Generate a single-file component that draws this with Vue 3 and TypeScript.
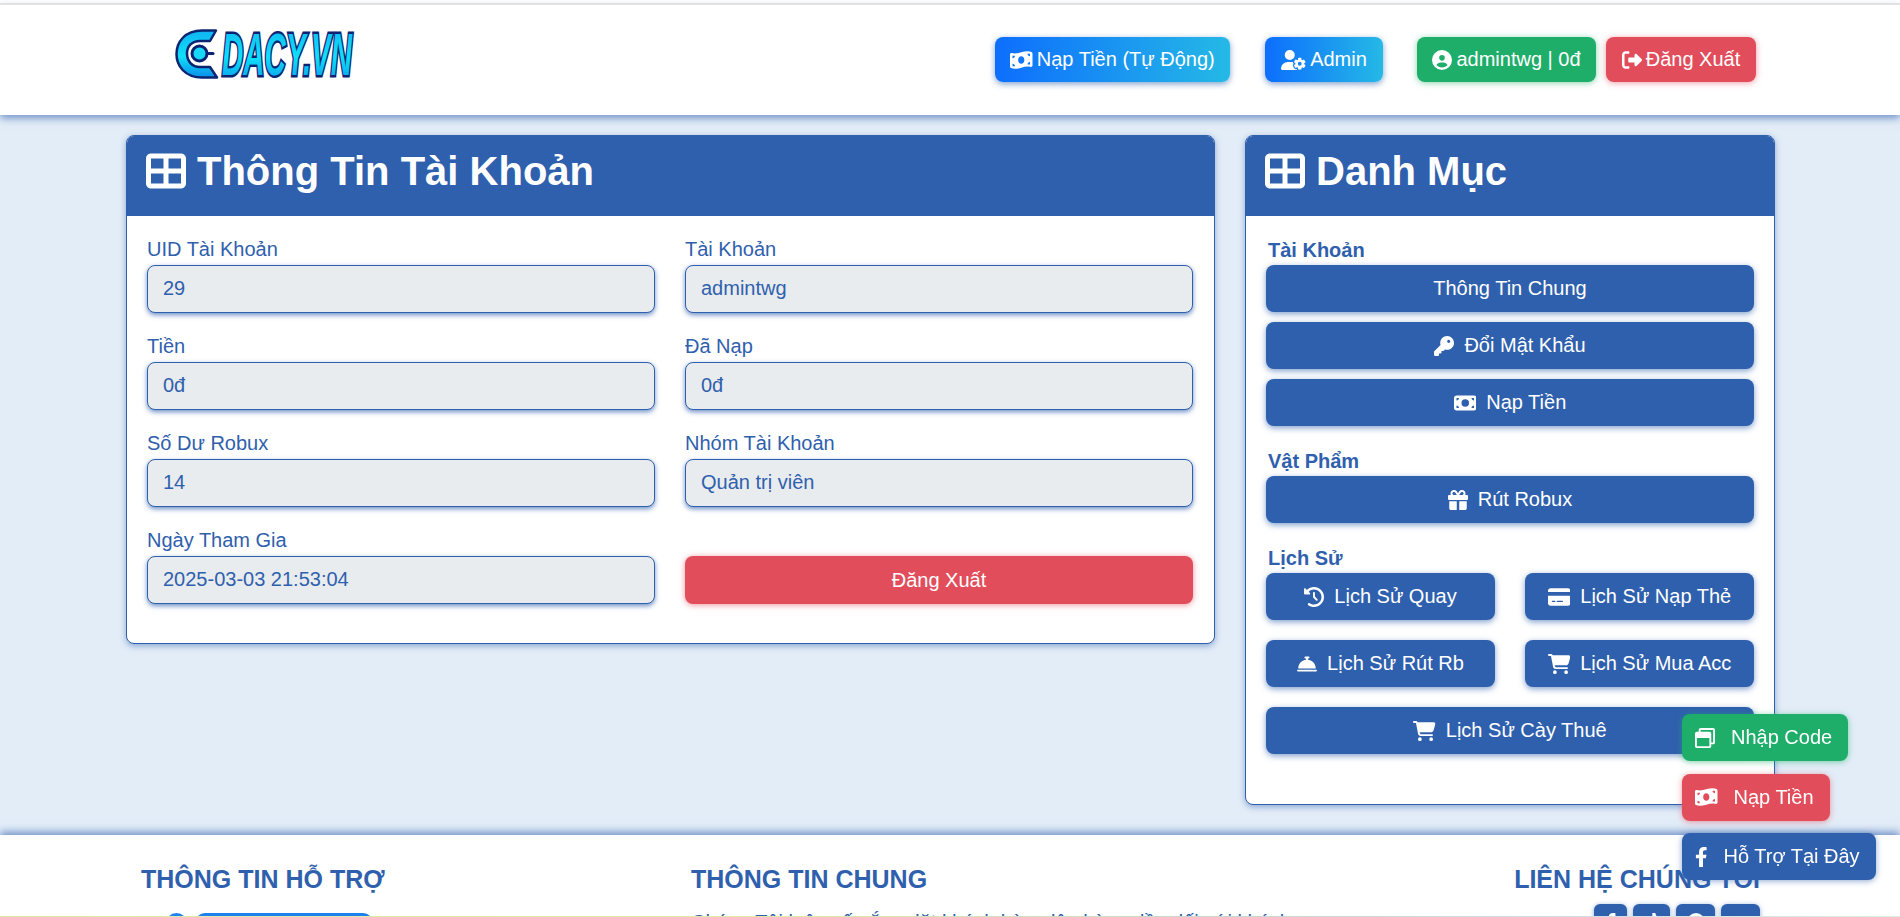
<script setup lang="ts">
interface Icon {
  box: string;
  d: string;
}

const icons: Record<string, Icon> = {
  grid: { box: '0 0 512 512', d: 'M448 96V224H288V96H448zm0 192V416H288V288H448zM224 224H64V96H224V224zM64 288H224V416H64V288zM64 32C28.7 32 0 60.7 0 96V416c0 35.3 28.7 64 64 64H448c35.3 0 64-28.7 64-64V96c0-35.3-28.7-64-64-64H64z' },
  wave: { box: '0 0 576 512', d: 'M0 112.5V422.3c0 18 10.1 35 27 41.3c87 32.5 174 10.3 261-11.9c79.8-20.3 159.6-40.7 239.3-18.9c23 6.3 48.7-9.5 48.7-33.4V89.7c0-18-10.1-35-27-41.3C462 15.9 375 38.1 288 60.3C208.2 80.6 128.4 100.9 48.7 79.1C25.6 72.8 0 88.6 0 112.5zM288 352c-44.2 0-80-43-80-96s35.8-96 80-96s80 43 80 96s-35.8 96-80 96zM64 352c35.3 0 64 28.7 64 64H64V352zm64-208c0 35.3-28.7 64-64 64V144h64zM512 304v64H448c0-35.3 28.7-64 64-64zM448 96h64v64c-35.3 0-64-28.7-64-64z' },
  bill: { box: '0 0 576 512', d: 'M64 64C28.7 64 0 92.7 0 128V384c0 35.3 28.7 64 64 64H512c35.3 0 64-28.7 64-64V128c0-35.3-28.7-64-64-64H64zm64 320H64V320c35.3 0 64 28.7 64 64zM64 192V128h64c0 35.3-28.7 64-64 64zM448 384c0-35.3 28.7-64 64-64v64H448zm64-192c-35.3 0-64-28.7-64-64h64v64zM288 160a96 96 0 1 1 0 192 96 96 0 1 1 0-192z' },
  userGear: { box: '0 0 640 512', d: 'M224 0a128 128 0 1 1 0 256A128 128 0 1 1 224 0zM178.3 304h91.4c11.8 0 23.4 1.2 34.5 3.3c-2.1 18.5 7.4 35.6 21.8 44.8c-16.6 10.6-26.7 31.6-20 53.3c4 12.9 9.4 25.5 16.4 37.6s15.2 23.1 24.4 33c15.7 16.9 39.6 18.4 57.2 8.7v.9c0 9.2 2.7 18.5 7.9 26.3H29.7C13.3 512 0 498.7 0 482.3C0 383.8 79.8 304 178.3 304zM436 218.2c0-7 4.5-13.3 11.3-14.8c10.5-2.4 21.5-3.7 32.7-3.7s22.2 1.3 32.7 3.7c6.8 1.5 11.3 7.8 11.3 14.8v30.6c7.9 3.4 15.4 7.7 22.3 12.9l26.5-15.3c6.1-3.5 13.7-2.7 18.5 2.4c7.6 8.1 14.3 17.2 20.1 27.2s10.3 20.4 13.5 31c2.1 6.7-1.1 13.7-7.2 17.2l-26.5 15.3c.4 4.2.7 8.5.7 12.9s-.2 8.7-.7 12.9l26.5 15.3c6.1 3.5 9.2 10.5 7.2 17.2c-3.3 10.6-7.8 21-13.5 31s-12.5 19.1-20.1 27.2c-4.8 5.1-12.5 5.9-18.5 2.4l-26.5-15.3c-6.9 5.1-14.3 9.5-22.3 12.9v30.6c0 7-4.5 13.3-11.3 14.8c-10.5 2.4-21.5 3.7-32.7 3.7s-22.2-1.3-32.7-3.7c-6.8-1.5-11.3-7.8-11.3-14.8V454.8c-8-3.4-15.6-7.7-22.5-12.9l-26.5 15.3c-6.1 3.5-13.7 2.7-18.5-2.4c-7.6-8.1-14.3-17.2-20.1-27.2s-10.3-20.4-13.5-31c-2.1-6.7 1.1-13.7 7.2-17.2l26.5-15.3c-.4-4.2-.7-8.5-.7-12.9s.2-8.7.7-12.9l-26.5-15.3c-6.1-3.5-9.2-10.5-7.2-17.2c3.3-10.6 7.8-21 13.5-31s12.5-19.1 20.1-27.2c4.8-5.1 12.4-5.9 18.5-2.4l26.5 15.3c6.9-5.1 14.5-9.5 22.5-12.9V218.2zm92.1 133.5a48.1 48.1 0 1 0 -96.1 0 48.1 48.1 0 1 0 96.1 0z' },
  user: { box: '0 0 512 512', d: 'M399 384.2C376.9 345.8 335.4 320 288 320H224c-47.4 0-88.9 25.8-111 64.2c35.2 39.2 86.2 63.8 143 63.8s107.8-24.7 143-63.8zM0 256a256 256 0 1 1 512 0A256 256 0 1 1 0 256zm256 16a72 72 0 1 0 0-144 72 72 0 1 0 0 144z' },
  logout: { box: '0 0 512 512', d: 'M377.9 105.9L500.7 228.7c7.2 7.2 11.3 17.1 11.3 27.3s-4.1 20.1-11.3 27.3L377.9 406.1c-6.4 6.4-15 9.9-24 9.9c-18.7 0-33.9-15.2-33.9-33.9l0-62.1-128 0c-17.7 0-32-14.3-32-32l0-64c0-17.7 14.3-32 32-32l128 0 0-62.1c0-18.7 15.2-33.9 33.9-33.9c9 0 17.6 3.6 24 9.9zM160 96L96 96c-17.7 0-32 14.3-32 32l0 256c0 17.7 14.3 32 32 32l64 0c17.7 0 32 14.3 32 32s-14.3 32-32 32l-64 0c-53 0-96-43-96-96L0 128C0 75 43 32 96 32l64 0c17.7 0 32 14.3 32 32s-14.3 32-32 32z' },
  key: { box: '0 0 512 512', d: 'M336 352c97.2 0 176-78.8 176-176S433.2 0 336 0S160 78.8 160 176c0 18.7 2.9 36.8 8.3 53.7L7 391c-4.5 4.5-7 10.6-7 17v80c0 13.3 10.7 24 24 24h80c13.3 0 24-10.7 24-24V448h40c13.3 0 24-10.7 24-24V384h40c6.4 0 12.5-2.5 17-7l33.3-33.3c16.9 5.4 35 8.3 53.7 8.3zM376 96a40 40 0 1 1 0 80 40 40 0 1 1 0-80z' },
  gift: { box: '0 0 512 512', d: 'M190.5 68.8L225.3 128H224 152c-22.1 0-40-17.9-40-40s17.9-40 40-40h2.2c14.9 0 28.8 7.9 36.3 20.8zM64 88c0 14.4 3.5 28 9.6 40H32c-17.7 0-32 14.3-32 32v64c0 17.7 14.3 32 32 32H480c17.7 0 32-14.3 32-32V160c0-17.7-14.3-32-32-32H438.4c6.1-12 9.6-25.6 9.6-40c0-48.6-39.4-88-88-88h-2.2c-31.9 0-61.5 16.9-77.7 44.4L256 85.5l-24.1-41C215.7 16.9 186.1 0 154.2 0H152C103.4 0 64 39.4 64 88zm336 0c0 22.1-17.9 40-40 40H288h-1.3l34.8-59.2C329.1 55.9 342.9 48 357.8 48H360c22.1 0 40 17.9 40 40zM32 288V464c0 26.5 21.5 48 48 48H224V288H32zM288 512H432c26.5 0 48-21.5 48-48V288H288V512z' },
  history: { box: '0 0 512 512', d: 'M75 75L41 41C25.9 25.9 0 36.6 0 57.9V168c0 13.3 10.7 24 24 24H134.1c21.4 0 32.1-25.9 17-41l-30.8-30.8C155 85.5 203 64 256 64c106 0 192 86 192 192s-86 192-192 192c-40.8 0-78.6-12.7-109.7-34.4c-14.5-10.1-34.4-6.6-44.6 7.9s-6.6 34.4 7.9 44.6C151.2 495 201.7 512 256 512c141.4 0 256-114.6 256-256S397.4 0 256 0C185.3 0 121.3 28.7 75 75zm181 53c-13.3 0-24 10.7-24 24V256c0 6.4 2.5 12.5 7 17l72 72c9.4 9.4 24.6 9.4 33.9 0s9.4-24.6 0-33.9l-65-65V152c0-13.3-10.7-24-24-24z' },
  card: { box: '0 0 576 512', d: 'M64 32C28.7 32 0 60.7 0 96v32H576V96c0-35.3-28.7-64-64-64H64zM576 224H0V416c0 35.3 28.7 64 64 64H512c35.3 0 64-28.7 64-64V224zM112 352h64c8.8 0 16 7.2 16 16s-7.2 16-16 16H112c-8.8 0-16-7.2-16-16s7.2-16 16-16zm112 16c0-8.8 7.2-16 16-16H368c8.8 0 16 7.2 16 16s-7.2 16-16 16H240c-8.8 0-16-7.2-16-16z' },
  bell: { box: '0 0 512 512', d: 'M216 64c-13.3 0-24 10.7-24 24s10.7 24 24 24h16v33.3C119.6 157.2 32 252.4 32 368H480c0-115.6-87.6-210.8-200-222.7V112h16c13.3 0 24-10.7 24-24s-10.7-24-24-24H256 216zM24 400c-13.3 0-24 10.7-24 24s10.7 24 24 24H488c13.3 0 24-10.7 24-24s-10.7-24-24-24H24z' },
  cart: { box: '0 0 576 512', d: 'M0 24C0 10.7 10.7 0 24 0H69.5c22 0 41.5 12.8 50.6 32h411c26.3 0 45.5 25 38.6 50.4l-41 152.3c-8.5 31.4-37 53.3-69.5 53.3H170.7l5.4 28.5c2.2 11.3 12.1 19.5 23.6 19.5H488c13.3 0 24 10.7 24 24s-10.7 24-24 24H199.7c-34.6 0-64.3-24.6-70.7-58.5L77.4 54.5c-.7-3.8-4-6.5-7.9-6.5H24C10.7 48 0 37.3 0 24zM128 464a48 48 0 1 1 96 0 48 48 0 1 1 -96 0zm336-48a48 48 0 1 1 0 96 48 48 0 1 1 0-96z' },
  restore: { box: '0 0 512 512', d: 'M464 0H144c-26.5 0-48 21.5-48 48v48H48c-26.5 0-48 21.5-48 48v320c0 26.5 21.5 48 48 48h320c26.5 0 48-21.5 48-48v-48h48c26.5 0 48-21.5 48-48V48c0-26.5-21.5-48-48-48zm-96 464H48V256h320v208zm96-96h-48V144c0-26.5-21.5-48-48-48H144V48h320v320z' },
  facebook: { box: '0 0 320 512', d: 'M279.14 288l14.22-92.66h-88.91v-60.13c0-25.35 12.42-50.06 52.24-50.06h40.42V6.26S260.43 0 225.36 0c-73.22 0-121.08 44.38-121.08 124.72v70.62H22.89V288h81.39v224h100.17V288z' },
  tiktok: { box: '0 0 448 512', d: 'M448 209.91a210.06 210.06 0 0 1-122.77-39.25V349.38A162.55 162.55 0 1 1 185 188.31V278.2a74.62 74.62 0 1 0 52.23 71.18V0l88 0a121.18 121.18 0 0 0 1.86 22.17h0A122.18 122.18 0 0 0 381 102.39a121.43 121.43 0 0 0 67 20.14Z' },
  circle: { box: '0 0 512 512', d: 'M0 256a256 256 0 1 1 512 0A256 256 0 1 1 0 256z' }
};

const topButtons = [
  { text: 'Nạp Tiền (Tự Động)', icon: 'wave', cls: 'is-grad', width: 235, after: 35 },
  { text: 'Admin', icon: 'userGear', cls: 'is-grad', width: 118, after: 34 },
  { text: 'admintwg | 0đ', icon: 'user', cls: 'is-green', width: 179, after: 10 },
  { text: 'Đăng Xuất', icon: 'logout', cls: 'is-red', width: 150, after: 0 }
];

const fields = [
  { label: 'UID Tài Khoản', value: '29' },
  { label: 'Tài Khoản', value: 'admintwg' },
  { label: 'Tiền', value: '0đ' },
  { label: 'Đã Nạp', value: '0đ' },
  { label: 'Số Dư Robux', value: '14' },
  { label: 'Nhóm Tài Khoản', value: 'Quản trị viên' },
  { label: 'Ngày Tham Gia', value: '2025-03-03 21:53:04' }
];

const accountLinks = [
  { text: 'Thông Tin Chung', icon: '' },
  { text: 'Đổi Mật Khẩu', icon: 'key' },
  { text: 'Nạp Tiền', icon: 'bill' }
];

const historyLinks = [
  { text: 'Lịch Sử Quay', icon: 'history', wide: false },
  { text: 'Lịch Sử Nạp Thẻ', icon: 'card', wide: false },
  { text: 'Lịch Sử Rút Rb', icon: 'bell', wide: false },
  { text: 'Lịch Sử Mua Acc', icon: 'cart', wide: false },
  { text: 'Lịch Sử Cày Thuê', icon: 'cart', wide: true }
];

const floats = [
  { text: 'Nhập Code', icon: 'restore', cls: 'is-green' },
  { text: 'Nạp Tiền', icon: 'wave', cls: 'is-red' },
  { text: 'Hỗ Trợ Tại Đây', icon: 'facebook', cls: 'is-blue' }
];

const socials = [
  { icon: 'facebook', width: 33 },
  { icon: 'tiktok', width: 37 },
  { icon: 'circle', width: 39 },
  { icon: '', width: 39 }
];
</script>

<template>
  <div class="page">
    <div class="topline"></div>

    <header class="topbar">
      <svg class="logo" viewBox="0 0 181 50" width="181" height="50">
        <defs>
          <linearGradient id="logoFill" x1="0" y1="0" x2="0" y2="1">
            <stop offset="0" stop-color="#10b4f2" />
            <stop offset="0.55" stop-color="#0fe0f8" />
            <stop offset="1" stop-color="#0a8ee8" />
          </linearGradient>
        </defs>
        <path d="M41 1.500H27C10 1.500 1.500 13 1.500 25S10 48.500 27 48.500H42L35 38H25C17 38 12 32 12 24.500S17 12 25 12H35Z"
          fill="url(#logoFill)" stroke="#0b2472" stroke-width="2.5" stroke-linejoin="round" />
        <path d="M30 24.500H38" stroke="#0b2472" stroke-width="3" stroke-linecap="round" />
        <circle cx="24.500" cy="24.500" r="7.500" fill="#17d8f7" stroke="#0b2472" stroke-width="3" />
        <g transform="translate(47 46) scale(0.492 1)">
          <text class="logo-text" font-size="60" fill="url(#logoFill)" stroke="#0b2472" stroke-width="5">DACY.VN</text>
        </g>
      </svg>

      <nav class="top-nav">
        <a v-for="b in topButtons" :key="b.text" class="top-btn" :class="b.cls"
          :style="{ width: b.width + 'px', marginRight: b.after + 'px' }">
          <svg class="ico" :viewBox="icons[b.icon].box"><path :d="icons[b.icon].d" /></svg>
          {{ b.text }}
        </a>
      </nav>
    </header>

    <main class="content">
      <section class="card card-info">
        <h2 class="card-head">
          <svg class="ico" :viewBox="icons.grid.box"><path :d="icons.grid.d" /></svg>
          Thông Tin Tài Khoản
        </h2>
        <div class="info-grid">
          <div v-for="f in fields" :key="f.label" class="field">
            <label>{{ f.label }}</label>
            <div class="input">{{ f.value }}</div>
          </div>
          <a class="btn btn-logout">Đăng Xuất</a>
        </div>
      </section>

      <aside class="card card-menu">
        <h2 class="card-head">
          <svg class="ico" :viewBox="icons.grid.box"><path :d="icons.grid.d" /></svg>
          Danh Mục
        </h2>
        <div class="menu-body">
          <h3>Tài Khoản</h3>
          <div class="stack">
            <a v-for="l in accountLinks" :key="l.text" class="btn">
              <svg v-if="l.icon" class="ico" :viewBox="icons[l.icon].box"><path :d="icons[l.icon].d" /></svg>
              {{ l.text }}
            </a>
          </div>

          <h3>Vật Phẩm</h3>
          <div class="stack">
            <a class="btn">
              <svg class="ico" :viewBox="icons.gift.box"><path :d="icons.gift.d" /></svg>
              Rút Robux
            </a>
          </div>

          <h3>Lịch Sử</h3>
          <div class="history">
            <a v-for="l in historyLinks" :key="l.text" class="btn" :class="{ wide: l.wide }">
              <svg class="ico" :viewBox="icons[l.icon].box"><path :d="icons[l.icon].d" /></svg>
              {{ l.text }}
            </a>
          </div>
        </div>
      </aside>
    </main>

    <footer class="footer">
      <div class="foot-col foot-support">
        <h4>THÔNG TIN HỖ TRỢ</h4>
        <div class="support-img">
          <span class="dot"></span>
          <span class="pill"></span>
        </div>
      </div>
      <div class="foot-col foot-about">
        <h4>THÔNG TIN CHUNG</h4>
        <p>Chúng Tôi luôn cố gắng đặt khách hàng lên hàng đầu đối với khách</p>
      </div>
      <div class="foot-col foot-contact">
        <h4>LIÊN HỆ CHÚNG TÔI</h4>
        <div class="socials">
          <a v-for="(s, i) in socials" :key="i" class="social" :style="{ width: s.width + 'px' }">
            <svg v-if="s.icon" class="ico" :viewBox="icons[s.icon].box"><path :d="icons[s.icon].d" /></svg>
          </a>
        </div>
      </div>
    </footer>

    <div class="stripe"></div>

    <div class="floats">
      <a v-for="f in floats" :key="f.text" class="float-btn" :class="f.cls">
        <svg class="ico" :viewBox="icons[f.icon].box"><path :d="icons[f.icon].d" /></svg>
        {{ f.text }}
      </a>
    </div>
  </div>
</template>

<style>
html,
body {
  margin: 0;
  overflow: hidden;
}
</style>

<style scoped>
.page {
  height: 917px;
  overflow: hidden;
  display: flex;
  flex-direction: column;
  background: #fff;
  font-family: "Liberation Sans", Arial, sans-serif;
  font-size: 20px;
  color: #2f60ad;
}

.ico {
  height: 1em;
  width: auto;
  fill: currentColor;
  flex: none;
}

.topline {
  height: 2px;
  margin-top: 3px;
  background: #e2e2e2;
  position: relative;
  z-index: 2;
}

.topbar {
  height: 110px;
  flex: none;
  display: flex;
  align-items: center;
  justify-content: space-between;
  padding: 0 144px 0 175px;
  background: #fff;
  box-shadow: 0 3px 8px rgba(47, 96, 173, 0.65);
  position: relative;
}

.logo {
  margin-top: -12px;
  overflow: visible;
}

.logo-text {
  font-family: "Liberation Sans", Arial, sans-serif;
  font-weight: 700;
  font-style: italic;
  paint-order: stroke;
}

.top-nav {
  display: flex;
  margin-top: -1px;
}

.top-btn {
  height: 45px;
  display: flex;
  align-items: center;
  justify-content: center;
  gap: 4px;
  border-radius: 8px;
  color: #fff;
}

.is-grad {
  background: linear-gradient(90deg, #0d6efd, #25b9e6);
  box-shadow: 0 2px 6px rgba(47, 96, 173, 0.6);
}

.is-green {
  background: #1fad6a;
  box-shadow: 0 1px 6px rgba(31, 173, 106, 0.55);
}

.is-red {
  background: #e14d5b;
  box-shadow: 0 1px 6px rgba(225, 77, 91, 0.55);
}

.is-blue {
  background: #2f60ad;
  box-shadow: 0 1px 6px rgba(47, 96, 173, 0.55);
}

.content {
  flex: none;
  height: 720px;
  display: flex;
  align-items: flex-start;
  gap: 30px;
  padding: 20px 125px 0 126px;
  box-sizing: border-box;
  background: #e3edf8;
}

.card {
  box-sizing: border-box;
  background: #fff;
  border: 1px solid #2f60ad;
  border-radius: 8px;
  box-shadow: 0 2px 6px rgba(47, 96, 173, 0.5);
  overflow: hidden;
}

.card-info {
  width: 1089px;
  height: 509px;
}

.card-menu {
  width: 530px;
  height: 670px;
}

.card-head {
  height: 80px;
  box-sizing: border-box;
  margin: 0;
  padding: 12px 20px 0;
  display: flex;
  align-items: flex-start;
  gap: 11px;
  background: #2f60ad;
  color: #fff;
  font-size: 40px;
  line-height: 46px;
  font-weight: 700;
}

.card-head .ico {
  margin-top: 3px;
  margin-left: -1px;
}

.info-grid {
  display: grid;
  grid-template-columns: 508px 508px;
  column-gap: 30px;
  row-gap: 20px;
  padding: 20px 20px 0;
}

.field label {
  display: block;
  height: 27px;
  line-height: 27px;
  margin-bottom: 2px;
}

.input {
  height: 48px;
  box-sizing: border-box;
  padding: 0 15px 2px;
  display: flex;
  align-items: center;
  background: #e9ecef;
  border: 1px solid #2f60ad;
  border-radius: 8px;
  box-shadow: 0 2px 5px rgba(47, 96, 173, 0.7);
}

.btn {
  height: 47px;
  display: flex;
  align-items: center;
  justify-content: center;
  gap: 10px;
  border-radius: 8px;
  background: #2f60ad;
  color: #fff;
  box-shadow: 0 2px 6px rgba(47, 96, 173, 0.6);
}

.btn-logout {
  align-self: end;
  height: 48px;
  background: #e14d5b;
  box-shadow: 0 1px 6px rgba(225, 77, 91, 0.6);
}

.menu-body {
  padding: 20px 20px 0;
}

.menu-body h3 {
  margin: 21px 0 0;
  padding: 3px 0 0 2px;
  height: 29px;
  line-height: 23px;
  font-size: 20px;
  font-weight: 700;
  box-sizing: border-box;
}

.menu-body h3:first-child {
  margin-top: 0;
}

.stack {
  display: flex;
  flex-direction: column;
  gap: 10px;
}

.history {
  display: grid;
  grid-template-columns: 229px 229px;
  gap: 20px 30px;
}

.history .wide {
  grid-column: 1 / 3;
}

.footer {
  flex: 1;
  min-height: 0;
  position: relative;
  display: flex;
  background: #fff;
  box-shadow: 0 -3px 8px rgba(47, 96, 173, 0.65);
  padding: 30px 140px 0 141px;
  overflow: hidden;
}

.foot-col h4 {
  margin: 0;
  font-size: 25px;
  line-height: 28px;
  font-weight: 700;
  white-space: nowrap;
}

.foot-support {
  width: 550px;
  flex: none;
}

.support-img {
  display: flex;
  gap: 8px;
  margin: 20px 0 0 25px;
}

.dot {
  width: 21px;
  height: 20px;
  border-radius: 50%;
  background: #1f80ef;
}

.pill {
  width: 178px;
  height: 40px;
  border-radius: 10px;
  background: #1f80ef;
}

.foot-about {
  flex: 1;
}

.foot-about p {
  margin: 16px 0 0;
  white-space: nowrap;
  line-height: 27px;
}

.socials {
  display: flex;
  justify-content: flex-end;
  gap: 6px;
  margin-top: 11px;
}

.social {
  height: 40px;
  display: flex;
  justify-content: center;
  padding-top: 9px;
  box-sizing: border-box;
  border-radius: 6px;
  background: #2f60ad;
  color: #fff;
  font-size: 18px;
  box-shadow: 0 1px 5px rgba(47, 96, 173, 0.55);
}

.stripe {
  height: 1px;
  flex: none;
  position: relative;
  background: linear-gradient(90deg, #dfe8a6 0%, #e3e9a9 40%, #c4d9cd 65%, #d0dde4 83%, #d9f2de 100%);
}

.floats {
  position: fixed;
  left: 1682px;
  bottom: 37px;
  display: flex;
  flex-direction: column;
  align-items: flex-start;
  gap: 12.5px;
}

.float-btn {
  height: 47px;
  padding: 0 16px 0 13px;
  display: flex;
  align-items: center;
  gap: 16px;
  border-radius: 8px;
  color: #fff;
  white-space: nowrap;
}
</style>
